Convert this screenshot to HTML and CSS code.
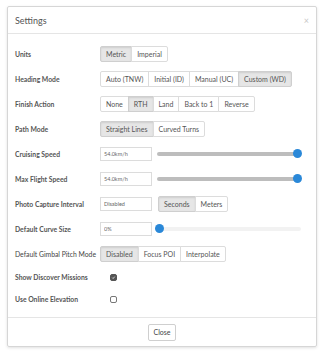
FILE: index.html
```html
<html>
  <head>
    <title>Settings</title>
    <link rel="stylesheet" href="styles.css">
  </head>
  <body>
	<div class="page">
		<div class="modal">
			<div class="modal-header">
				<span class="modal-title">Settings</span>
				<span class="close-x">&times;</span>
			</div>
			<div class="modal-body">
				<div class="row">
					<div class="label">Units</div>
					<div class="group">
						<button class="active">Metric</button>
						<button>Imperial</button>
					</div>
				</div>
				<div class="row">
					<div class="label">Heading Mode</div>
					<div class="group">
						<button>Auto (TNW)</button>
						<button>Initial (ID)</button>
						<button>Manual (UC)</button>
						<button class="active">Custom (WD)</button>
					</div>
				</div>
				<div class="row">
					<div class="label">Finish Action</div>
					<div class="group">
						<button>None</button>
						<button class="active">RTH</button>
						<button>Land</button>
						<button>Back to 1</button>
						<button>Reverse</button>
					</div>
				</div>
				<div class="row">
					<div class="label">Path Mode</div>
					<div class="group">
						<button class="active">Straight Lines</button>
						<button>Curved Turns</button>
					</div>
				</div>
				<div class="row">
					<div class="label">Cruising Speed</div>
					<input class="field" type="text" value="54.0km/h">
					<div class="slider full"><span class="thumb"></span></div>
				</div>
				<div class="row">
					<div class="label">Max Flight Speed</div>
					<input class="field" type="text" value="54.0km/h">
					<div class="slider full"><span class="thumb"></span></div>
				</div>
				<div class="row">
					<div class="label">Photo Capture Interval</div>
					<input class="field" type="text" value="Disabled">
					<div class="group spaced">
						<button class="active">Seconds</button>
						<button>Meters</button>
					</div>
				</div>
				<div class="row">
					<div class="label">Default Curve Size</div>
					<input class="field" type="text" value="0%">
					<div class="slider empty"><span class="thumb"></span></div>
				</div>
				<div class="row">
					<div class="label long">Default Gimbal Pitch Mode</div>
					<div class="group">
						<button class="active">Disabled</button>
						<button>Focus POI</button>
						<button>Interpolate</button>
					</div>
				</div>
				<div class="row short">
					<div class="label">Show Discover Missions</div>
					<span class="check checked">
						<svg viewBox="0 0 8 8" width="7" height="7"><path d="M2 4.2 L3.4 5.6 L6 2.6" fill="none" stroke="#fff" stroke-width="1.2"/></svg>
					</span>
				</div>
				<div class="row short">
					<div class="label">Use Online Elevation</div>
					<span class="check"></span>
				</div>
			</div>
			<div class="modal-footer">
				<button class="close-btn">Close</button>
			</div>
		</div>
	</div>
  </body>
</html>
```

FILE: styles.css
```css
body {
	margin: 0;
	background-color: #fff;
	color: #555;
	font-family: 'Lato', sans-serif;
}

.page {
	padding: 6px 8px 5px 7px;
}

.modal {
	height: 341px;
	box-sizing: border-box;
	border: 1px solid #d6d6d6;
	border-radius: 2px;
	box-shadow: 0 1px 3px rgba(0, 0, 0, 0.12);
	display: flex;
	flex-direction: column;
}

.modal-header {
	height: 26px;
	border-bottom: 1px solid #e5e5e5;
	display: flex;
	align-items: center;
	justify-content: space-between;
	padding: 0 7px 0 7px;
}

.modal-title {
	font-size: 9px;
	color: #555;
}

.close-x {
	font-size: 9px;
	color: #c8c8c8;
}

.modal-body {
	flex: 1;
	padding: 7px 7px 0 7px;
}

.row {
	height: 25px;
	display: flex;
	align-items: center;
}

.row.short {
	height: 22px;
}

.label {
	width: 85px;
	flex-shrink: 0;
	font-size: 6.8px;
	font-weight: bold;
	color: #555;
	white-space: nowrap;
}

.label.long {
	font-weight: normal;
	color: #444;
}

.group {
	display: flex;
}

.group.spaced {
	margin-left: 6px;
}

button {
	font-family: 'Lato', sans-serif;
	font-size: 7px;
	color: #555;
	background-color: #fff;
	border: 1px solid #dcdcdc;
	height: 16px;
	padding: 0 5px;
	margin: 0;
	margin-left: -1px;
	border-radius: 0;
	cursor: pointer;
}

.group button:first-child {
	margin-left: 0;
	border-radius: 2px 0 0 2px;
}

.group button:last-child {
	border-radius: 0 2px 2px 0;
}

button.active {
	background-color: #e6e6e6;
	border-color: #cfcfcf;
	box-shadow: inset 0 1px 2px rgba(0, 0, 0, 0.1);
}

.field {
	width: 52px;
	height: 14px;
	box-sizing: border-box;
	border: 1px solid #dcdcdc;
	font-family: 'Lato', sans-serif;
	font-size: 5.5px;
	color: #666;
	padding: 0 0 0 3px;
	margin: 0;
}

.slider {
	position: relative;
	width: 144px;
	height: 4px;
	margin-left: 5px;
	border-radius: 2px;
	background-color: #bdbdbd;
}

.slider.empty {
	background-color: #f2f2f2;
}

.thumb {
	position: absolute;
	top: -2.5px;
	width: 9px;
	height: 9px;
	border-radius: 50%;
	background-color: #2a88d8;
}

.slider.full .thumb {
	right: -1px;
}

.slider.empty .thumb {
	left: -2px;
}

.check {
	width: 7px;
	height: 7px;
	box-sizing: border-box;
	margin-left: 10px;
	border: 1px solid #777;
	border-radius: 2px;
	display: flex;
	align-items: center;
	justify-content: center;
}

.check.checked {
	background-color: #555;
	border-color: #555;
}

.check svg {
	display: block;
}

.modal-footer {
	height: 28px;
	border-top: 1px solid #e5e5e5;
	display: flex;
	align-items: center;
	justify-content: center;
}

.close-btn {
	margin-left: 0;
	height: 17px;
	padding: 0 4.5px;
	border: 1px solid #cfcfcf;
	border-radius: 2px;
	color: #444;
}
```
